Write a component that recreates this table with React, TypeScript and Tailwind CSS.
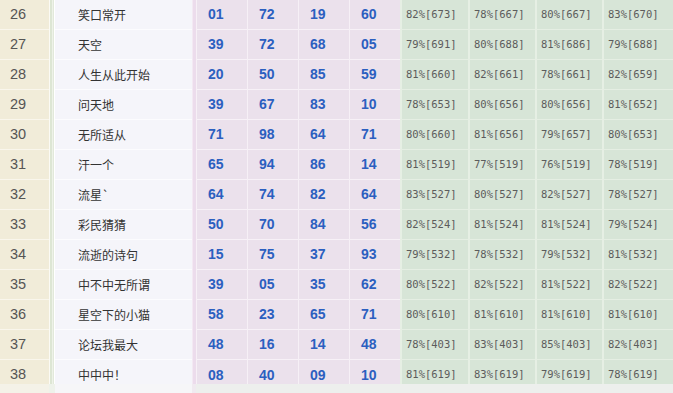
import React from 'react';

type Row = {
  no: number;
  name: string;
  nums: string[];
  rates: string[];
};

const rows: Row[] = [
  { no: 26, name: '笑口常开', nums: ['01', '72', '19', '60'], rates: ['82%[673]', '78%[667]', '80%[667]', '83%[670]'] },
  { no: 27, name: '天空', nums: ['39', '72', '68', '05'], rates: ['79%[691]', '80%[688]', '81%[686]', '79%[688]'] },
  { no: 28, name: '人生从此开始', nums: ['20', '50', '85', '59'], rates: ['81%[660]', '82%[661]', '78%[661]', '82%[659]'] },
  { no: 29, name: '问天地', nums: ['39', '67', '83', '10'], rates: ['78%[653]', '80%[656]', '80%[656]', '81%[652]'] },
  { no: 30, name: '无所适从', nums: ['71', '98', '64', '71'], rates: ['80%[660]', '81%[656]', '79%[657]', '80%[653]'] },
  { no: 31, name: '汗一个', nums: ['65', '94', '86', '14'], rates: ['81%[519]', '77%[519]', '76%[519]', '78%[519]'] },
  { no: 32, name: '流星`', nums: ['64', '74', '82', '64'], rates: ['83%[527]', '80%[527]', '82%[527]', '78%[527]'] },
  { no: 33, name: '彩民猜猜', nums: ['50', '70', '84', '56'], rates: ['82%[524]', '81%[524]', '81%[524]', '79%[524]'] },
  { no: 34, name: '流逝的诗句', nums: ['15', '75', '37', '93'], rates: ['79%[532]', '78%[532]', '79%[532]', '81%[532]'] },
  { no: 35, name: '中不中无所谓', nums: ['39', '05', '35', '62'], rates: ['80%[522]', '82%[522]', '81%[522]', '82%[522]'] },
  { no: 36, name: '星空下的小猫', nums: ['58', '23', '65', '71'], rates: ['80%[610]', '81%[610]', '81%[610]', '81%[610]'] },
  { no: 37, name: '论坛我最大', nums: ['48', '16', '14', '48'], rates: ['78%[403]', '83%[403]', '85%[403]', '82%[403]'] },
  { no: 38, name: '中中中！', nums: ['08', '40', '09', '10'], rates: ['81%[619]', '83%[619]', '79%[619]', '78%[619]'] },
];

const rateWidths = ['w-[68px]', 'w-[67px]', 'w-[67px]', 'w-[71px]'];

function TableRow({ row, last }: { row: Row; last: boolean }) {
  // 最后一行被底部灰条截掉一截
  const h = last ? 'h-[24px] pt-[6px]' : 'h-[30px] border-b';
  return (
    <div className="flex">
      <div className={`w-[49px] shrink-0 flex items-center pl-[10px] bg-[#f1ecd9] border-[#f9f6ec] ${h} text-[14.5px] text-[#555] font-['Liberation_Sans',sans-serif]`}>
        {row.no}
      </div>
      <div className={`w-[6px] shrink-0 flex ${last ? 'h-[24px]' : 'h-[30px]'} bg-white`}>
        <div className="w-[1px] bg-[#fbfaf4]" />
        <div className="w-[2px] bg-[#dde6d4]" />
        <div className="w-[1px] bg-[#eef2e8]" />
        <div className="w-[1px] bg-[#e2e9da]" />
        <div className="w-[1px] bg-white" />
      </div>
      <div className={`w-[137px] shrink-0 flex items-center pl-[23px] bg-[#f5f5fa] border-[#fcfcfe] ${h} text-[12px] text-[#333] font-['Noto_Sans_CJK_SC',sans-serif]`}>
        {row.name}
      </div>
      <div className={`w-[4px] shrink-0 ${last ? 'h-[24px]' : 'h-[30px]'} bg-[#ecdcec] border-l border-[#f3e9f3]`} />
      {row.nums.map((n, i) => (
        <div
          key={i}
          className={`w-[51px] shrink-0 flex items-center pl-[11px] bg-[#ebe1ec] border-l border-l-[#f6f0f6] border-b-[#f7f1f7] ${h} text-[14px] font-bold text-[#2b5fc0] font-['Liberation_Sans',sans-serif]`}
        >
          {n}
        </div>
      ))}
      {row.rates.map((r, i) => (
        <div
          key={i}
          className={`${rateWidths[i]} shrink-0 flex items-center pl-[4px] bg-[#d7e5d7] border-l-2 border-l-[#e6efe4] border-b-[#e5eee3] ${h} text-[10.5px] text-[#5c5c5c] font-['DejaVu_Sans_Mono',monospace]`}
        >
          {r}
        </div>
      ))}
    </div>
  );
}

export default function App() {
  return (
    <div className="w-[673px] h-[393px] overflow-hidden bg-[#eef0ec]">
      {rows.map((row, i) => (
        <TableRow key={row.no} row={row} last={i === rows.length - 1} />
      ))}
      <div className="flex h-[9px]">
        <div className="w-[49px] bg-[#f4f2e8]" />
        <div className="w-[6px] bg-[#eef2ea]" />
        <div className="w-[137px] bg-[#f6f6f8]" />
        <div className="w-[4px] bg-[#f0eaf0]" />
        <div className="flex-1 bg-[#edefed]" />
      </div>
    </div>
  );
}
